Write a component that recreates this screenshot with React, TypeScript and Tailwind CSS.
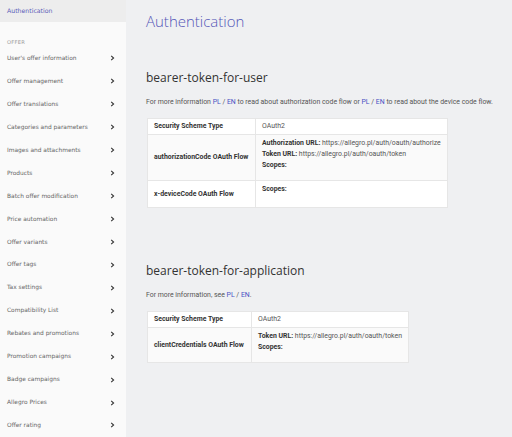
import React from 'react';

const MENU = [
  "User's offer information",
  'Offer management',
  'Offer translations',
  'Categories and parameters',
  'Images and attachments',
  'Products',
  'Batch offer modification',
  'Price automation',
  'Offer variants',
  'Offer tags',
  'Tax settings',
  'Compatibility List',
  'Rebates and promotions',
  'Promotion campaigns',
  'Badge campaigns',
  'Allegro Prices',
  'Offer rating',
];

const Chevron = () => (
  <svg width="5" height="6" viewBox="0 0 5 6" className="shrink-0">
    <polyline points="1.2,0.8 3.6,3 1.2,5.2" fill="none" stroke="#333" strokeWidth="1.1" />
  </svg>
);

const Sidebar = () => (
  <aside className="w-[126px] shrink-0 bg-[#fafafa] font-['DejaVu_Sans',sans-serif]">
    <div className="h-[22px] bg-[#ededed] flex items-center pl-[7px] text-[6.2px] text-[#5a5cb8]">
      Authentication
    </div>
    <div className="pt-[16px] pl-[7px] text-[5.2px] text-[#999] tracking-[0.2px] h-[25px] leading-[8px]">OFFER</div>
    <ul>
      {MENU.map(m => (
        <li key={m} className="h-[22.95px] flex items-center justify-between pl-[7px] pr-[11px] text-[5.9px] text-[#666]">
          <span>{m}</span>
          <Chevron />
        </li>
      ))}
    </ul>
  </aside>
);

const Link = ({ children }: { children: React.ReactNode }) => (
  <span className="text-[#4a52c4]">{children}</span>
);

const Row = ({ head, children, h, bg }: { head: string; children: React.ReactNode; h: string; bg: string }) => (
  <tr className={`${bg} border-t border-[#e6e6e6]`}>
    <td className={`${h} px-[6px] font-bold text-[#333] border-r border-[#e6e6e6] align-middle`}>{head}</td>
    <td className="px-[6px] align-top pt-[3px] text-[#555]">{children}</td>
  </tr>
);

export default function App() {
  return (
    <div className="flex w-[512px] h-[437px] overflow-hidden bg-[#eff0f2]">
      <Sidebar />
      <main className="flex-1 pl-[20px] font-['Roboto',sans-serif]">
        <h1 className="mt-[11px] h-[20px] leading-[20px] text-[15px] font-light text-[#5457b8] font-['Open_Sans',sans-serif]">
          Authentication
        </h1>

        <h2 className="mt-[38px] h-[18px] leading-[18px] text-[12px] text-[#333] font-['Open_Sans',sans-serif]">
          bearer-token-for-user
        </h2>
        <p className="mt-[10px] text-[6.9px] leading-[10px] text-[#555]">
          For more information <Link>PL</Link> / <Link>EN</Link> to read about authorization code flow or{' '}
          <Link>PL</Link> / <Link>EN</Link> to read about the device code flow.
        </p>
        <table className="mt-[11px] ml-[1px] border border-[#e6e6e6] text-[6.9px] leading-[11px] border-collapse">
          <tbody>
            <tr className="bg-white">
              <td className="w-[108px] h-[16px] px-[6px] font-bold text-[#333] border-r border-[#e6e6e6]">Security Scheme Type</td>
              <td className="px-[6px] text-[#555]">OAuth2</td>
            </tr>
            <Row head="authorizationCode OAuth Flow" h="h-[46px]" bg="bg-[#fafafa]">
              <div><b className="text-[#333]">Authorization URL:</b> https://allegro.pl/auth/oauth/authorize</div>
              <div><b className="text-[#333]">Token URL:</b> https://allegro.pl/auth/oauth/token</div>
              <div><b className="text-[#333]">Scopes:</b></div>
            </Row>
            <Row head="x-deviceCode OAuth Flow" h="h-[27px]" bg="bg-white">
              <div><b className="text-[#333]">Scopes:</b></div>
            </Row>
          </tbody>
        </table>

        <h2 className="mt-[54px] h-[18px] leading-[18px] text-[12px] text-[#333] font-['Open_Sans',sans-serif]">
          bearer-token-for-application
        </h2>
        <p className="mt-[10px] text-[6.9px] leading-[10px] text-[#555]">
          For more information, see <Link>PL</Link> / <Link>EN</Link>.
        </p>
        <table className="mt-[11px] ml-[1px] border border-[#e6e6e6] text-[6.9px] leading-[11px] border-collapse">
          <tbody>
            <tr className="bg-white">
              <td className="w-[104px] h-[16px] px-[6px] font-bold text-[#333] border-r border-[#e6e6e6]">Security Scheme Type</td>
              <td className="px-[6px] text-[#555]">OAuth2</td>
            </tr>
            <Row head="clientCredentials OAuth Flow" h="h-[35px]" bg="bg-[#fafafa]">
              <div><b className="text-[#333]">Token URL:</b> https://allegro.pl/auth/oauth/token</div>
              <div><b className="text-[#333]">Scopes:</b></div>
            </Row>
          </tbody>
        </table>
      </main>
    </div>
  );
}
